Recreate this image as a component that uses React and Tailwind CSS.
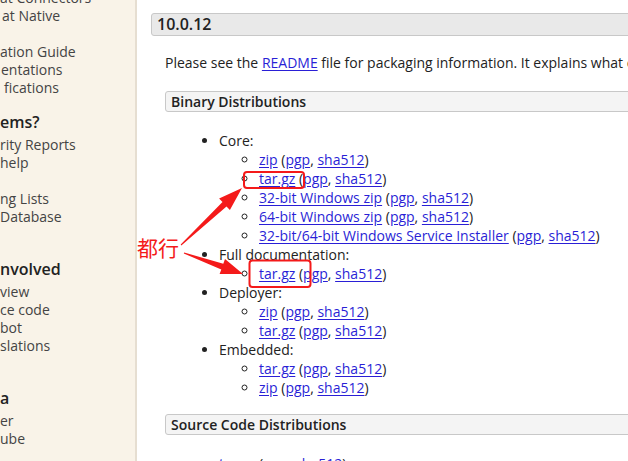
const sideItems = [
    { t: 'at Connectors' },
    { t: 'at Native', x: 2 },
    { t: '' },
    { t: 'ation Guide' },
    { t: 'entations', x: 1 },
    { t: 'fications', x: 4 },
    { h: 'ems?' },
    { t: 'rity Reports' },
    { t: 'help' },
    { t: '' },
    { t: 'ng Lists' },
    { t: 'Database' },
    { t: '' },
    { h: 'nvolved' },
    { t: 'view' },
    { t: 'ce code' },
    { t: 'bot' },
    { t: 'slations' },
    { t: '' },
    { h: 'a' },
    { t: 'er' },
    { t: 'ube' },
]

const binary = [
    { label: 'Core:', files: ['zip', 'tar.gz', '32-bit Windows zip', '64-bit Windows zip', '32-bit/64-bit Windows Service Installer'] },
    { label: 'Full documentation:', files: ['tar.gz'] },
    { label: 'Deployer:', files: ['zip', 'tar.gz'] },
    { label: 'Embedded:', files: ['tar.gz', 'zip'] },
]

function A({ children }) {
    return <a href="#" className="text-[#2a1fd6] underline underline-offset-2">{children}</a>
}

function FileLine({ name }) {
    return (
        <li className="h-[19px]">
            <A>{name}</A> (<A>pgp</A>, <A>sha512</A>)
        </li>
    )
}

function Box({ children, big }) {
    return big ? (
        <h3 className="h-[23px] leading-[21px] bg-[#e9e9e9] border border-[#c8c8c8] rounded-[3px] pl-[5px] text-[16px] font-semibold text-[#222]">{children}</h3>
    ) : (
        <h4 className="h-[21px] leading-[19px] bg-[#f4f4f4] border border-[#c8c8c8] rounded-[3px] pl-[5px] text-[14px] font-semibold text-[#222]">{children}</h4>
    )
}

export default function App() {
    return (
        <div className="relative w-[628px] h-[461px] overflow-hidden flex bg-white text-[14px] leading-[19px] text-[#222]"
            style={{ fontFamily: '"Open Sans", "Noto Sans", sans-serif' }}>

            {/* ── sidebar (cut off on the left) ── */}
            <aside className="w-[137px] shrink-0 bg-[#f9f3e8] border-r-2 border-[#e6ded1] overflow-hidden">
                <div className="mt-[-11px]">
                    {sideItems.map((it, i) =>
                        it.h ? (
                            <div key={i} className="mt-[14px] mb-[3px] h-[22px] leading-[22px] text-[16px] font-semibold text-[#222] whitespace-nowrap">{it.h}</div>
                        ) : (
                            <div key={i} className="h-[18px] leading-[18px] text-[#444] whitespace-nowrap" style={{ paddingLeft: it.x || 0 }}>{it.t}</div>
                        )
                    )}
                </div>
            </aside>

            {/* ── main content ── */}
            <main className="shrink-0 w-[820px] ml-[14px] pt-[13px]">
                <Box big>10.0.12</Box>

                <div className="ml-[14px]">
                    <p className="mt-[17px] whitespace-nowrap">
                        Please see the <A>README</A> file for packaging information. It explains what every distribution contains.
                    </p>

                    <div className="mt-[19px]"><Box>Binary Distributions</Box></div>

                    <ul className="mt-[19px] pl-[54px] list-disc">
                        {binary.map((g) => (
                            <li key={g.label}>
                                <div className="h-[19px]">{g.label}</div>
                                <ul className="pl-[40px] list-[circle]">
                                    {g.files.map((f, i) => <FileLine key={i} name={f} />)}
                                </ul>
                            </li>
                        ))}
                    </ul>

                    <div className="mt-[17px]"><Box>Source Code Distributions</Box></div>

                    <ul className="mt-[19px] pl-[54px] list-disc">
                        <FileLine name="tar.gz" />
                        <FileLine name="zip" />
                    </ul>
                </div>
            </main>

            {/* ── red annotations drawn over the screenshot ── */}
            <div className="absolute inset-0 pointer-events-none">
                <span className="absolute left-[137px] top-[235px] text-[21px] leading-[24px] text-[#f41a1a]"
                    style={{ fontFamily: '"Noto Sans CJK SC", sans-serif' }}>都行</span>
                <svg width="628" height="461" className="absolute inset-0">
                    <rect x="244" y="172" width="60" height="16" rx="3" fill="none" stroke="#f41a1a" strokeWidth="2" />
                    <rect x="249.5" y="260.5" width="61" height="26.5" rx="3" fill="none" stroke="#f41a1a" strokeWidth="2" />
                    <polygon fill="#f41a1a"
                        points="181.3,245.4 226.5,206.5 229.9,210.1 242,188 219.1,198.5 222.5,202.1 180.7,244.6" />
                    <polygon fill="#f41a1a"
                        points="183.8,253.5 221.3,269.4 219.6,274.1 243,274 225,259.1 223.3,263.8 184.2,252.5" />
                </svg>
            </div>
        </div>
    )
}
